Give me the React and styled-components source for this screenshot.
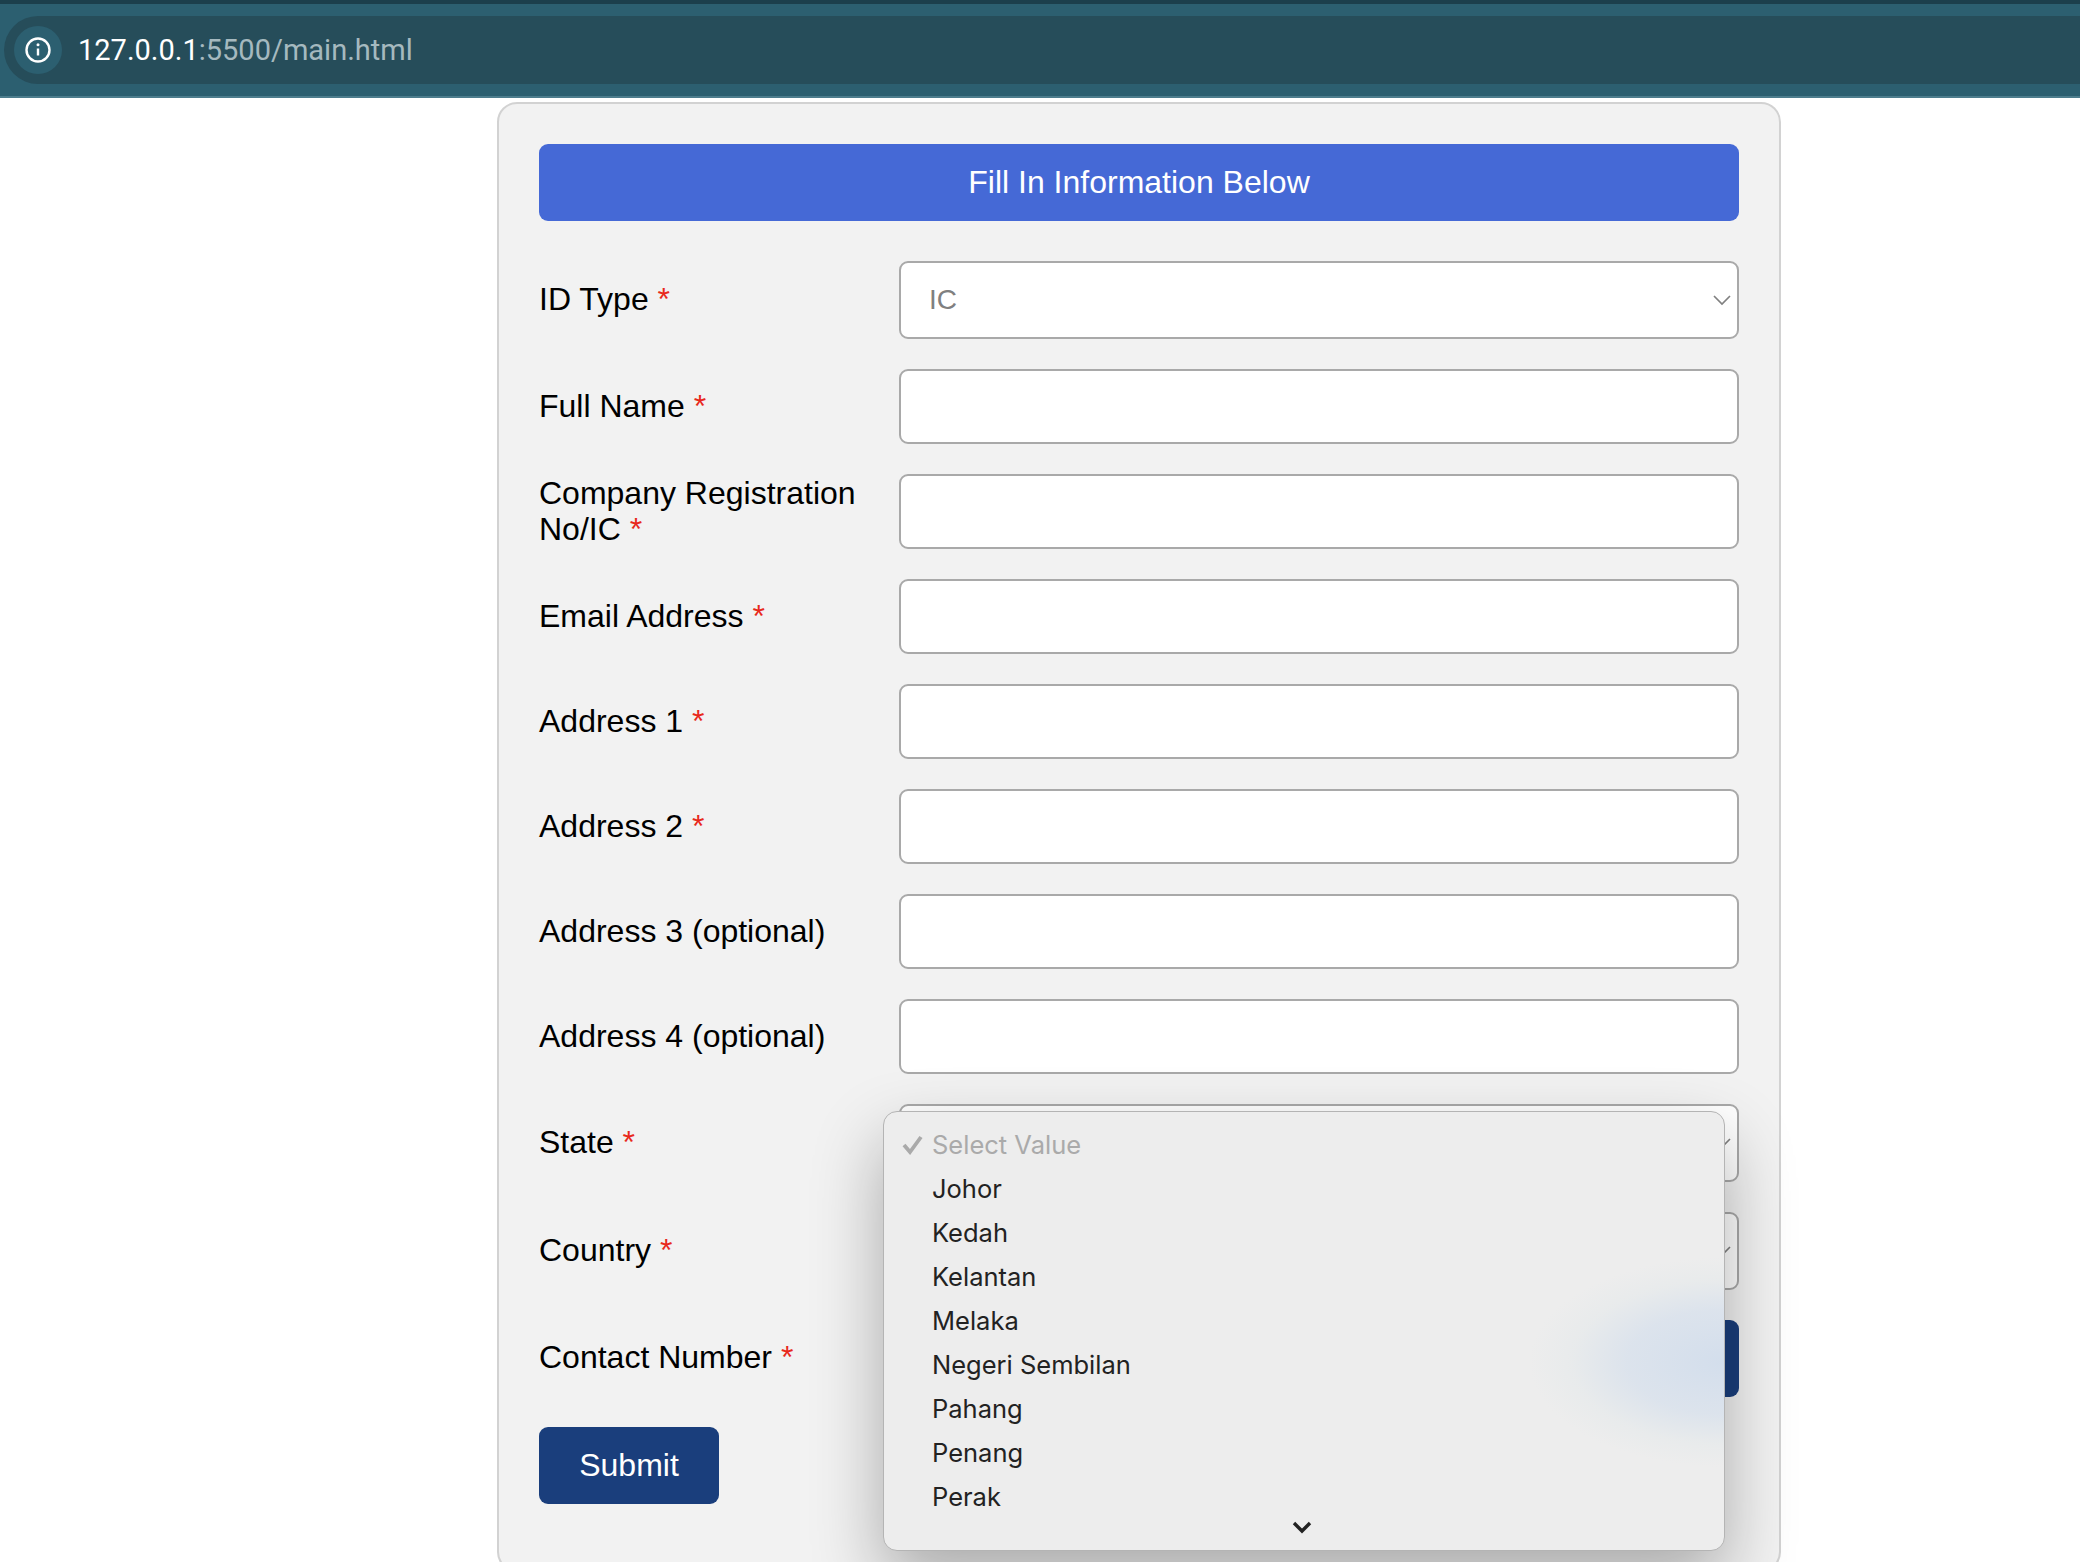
import React from 'react';
import styled, { createGlobalStyle } from 'styled-components';

const GlobalStyle = createGlobalStyle`
  html, body {
    margin: 0;
    height: 1562px;
    overflow: hidden;
    background: #fff;
  }
  * { box-sizing: border-box; }
`;

const Page = styled.div`
  width: 2080px;
  height: 1562px;
  overflow: hidden;
  font-family: "Liberation Sans", Arial, sans-serif;
`;

const BrowserBar = styled.div`
  height: 98px;
  background: #2c5f70;
  border-top: 4px solid #1c3f4c;
  border-bottom: 2px solid #4d7d8d;
  padding: 12px 0 12px 4px;
`;

const Omnibox = styled.div`
  height: 68px;
  background: #264d5a;
  border-radius: 34px 0 0 34px;
  display: flex;
  align-items: center;
  padding-left: 10px;
  font-family: Roboto, sans-serif;
  font-size: 29px;
  color: #a5b9bf;
`;

const InfoChip = styled.div`
  width: 48px;
  height: 48px;
  border-radius: 50%;
  background: #2c5f70;
  display: flex;
  align-items: center;
  justify-content: center;
  margin-right: 16px;
`;

const Host = styled.span`
  color: #fff;
`;

const Card = styled.div`
  width: 1284px;
  height: 1470px;
  margin: 4px 0 0 497px;
  padding: 40px;
  background: #f2f2f2;
  border: 2px solid #d2d2d2;
  border-radius: 20px;
  position: relative;
`;

const Banner = styled.div`
  height: 77px;
  background: #4569d6;
  border-radius: 9px;
  color: #fff;
  font-size: 32px;
  display: flex;
  align-items: center;
  justify-content: center;
  margin-bottom: 40px;
`;

const Row = styled.div`
  display: grid;
  grid-template-columns: 360px 1fr;
  align-items: center;
  margin-bottom: 30px;
`;

const Label = styled.label`
  font-size: 32px;
  line-height: 36px;
  color: #000;
  padding-right: 20px;
  padding-bottom: ${props => (props.$raised ? '4px' : '2px')};
`;

const Star = styled.span`
  color: #e8291c;
`;

const TextField = styled.input`
  display: block;
  width: 100%;
  height: 75px;
  background: #fff;
  border: 2px solid #a9a9a9;
  border-radius: 9px;
`;

const SelectBox = styled.div`
  height: 78px;
  background: #fff;
  border: 2px solid #a9a9a9;
  border-radius: 9px;
  padding: 0 5px 0 28px;
  display: flex;
  align-items: center;
  justify-content: space-between;
  font-size: 28px;
  color: #808080;
`;

const DarkButton = styled.button`
  display: block;
  width: ${props => (props.$wide ? '100%' : '180px')};
  height: 77px;
  background: #1a3e7c;
  border: 0;
  border-radius: 9px;
  color: #fff;
  font-family: inherit;
  font-size: 32px;
  padding: 0;
`;

const Dropdown = styled.div`
  position: absolute;
  left: 384px;
  top: 1007px;
  width: 842px;
  height: 440px;
  padding: 10px 0 0 48px;
  background: #ededed;
  border: 1px solid #b4b4b4;
  border-radius: 14px;
  box-shadow: 0 30px 70px rgba(0, 0, 0, 0.3);
  font-family: Inter, sans-serif;
  font-size: 25.5px;
  color: #222;
  overflow: hidden;
`;

const Glow = styled.div`
  position: absolute;
  right: -195px;
  top: 145px;
  width: 390px;
  height: 210px;
  background: radial-gradient(
    closest-side,
    #d3deec 0%,
    rgba(211, 222, 236, 0.65) 50%,
    rgba(218, 228, 232, 0.25) 78%,
    rgba(225, 232, 232, 0) 100%
  );
`;

const Option = styled.div`
  height: 44px;
  display: flex;
  align-items: center;
  position: relative;
  color: ${props => (props.$selected ? '#aaa' : '#222')};
`;

const CheckMark = styled.svg`
  position: absolute;
  left: -31px;
  top: 12px;
`;

const MoreArrow = styled.svg`
  position: absolute;
  left: 407px;
  bottom: 16px;
`;

const Chevron = () => (
  <svg width="20" height="14" viewBox="0 0 20 14" fill="none">
    <path d="M2 3l8 8 8-8" stroke="#808080" strokeWidth="1.7" />
  </svg>
);

const fields = [
  { label: 'ID Type', required: true, kind: 'select', value: 'IC' },
  { label: 'Full Name', required: true },
  { label: 'Company Registration No/IC', required: true },
  { label: 'Email Address', required: true },
  { label: 'Address 1', required: true },
  { label: 'Address 2', required: true },
  { label: 'Address 3 (optional)' },
  { label: 'Address 4 (optional)' },
  { label: 'State', required: true, kind: 'select', value: '' },
  { label: 'Country', required: true, kind: 'select', value: '' },
  { label: 'Contact Number', required: true, kind: 'button' },
];

const states = ['Johor', 'Kedah', 'Kelantan', 'Melaka', 'Negeri Sembilan', 'Pahang', 'Penang', 'Perak'];

export default function App() {
  return (
    <Page>
      <GlobalStyle />
      <BrowserBar>
        <Omnibox>
          <InfoChip>
            <svg width="28" height="28" viewBox="0 0 28 28" fill="none">
              <circle cx="14" cy="14" r="11.5" stroke="#fff" strokeWidth="2.4" />
              <path d="M14 12.5v7" stroke="#fff" strokeWidth="2.4" />
              <circle cx="14" cy="8.8" r="1.5" fill="#fff" />
            </svg>
          </InfoChip>
          <Host>127.0.0.1</Host>:5500/main.html
        </Omnibox>
      </BrowserBar>
      <Card>
        <Banner>Fill In Information Below</Banner>
        {fields.map(field => (
          <Row key={field.label}>
            <Label $raised={field.kind === 'button'}>
              {field.label}
              {field.required && ' '}
              {field.required && <Star>*</Star>}
            </Label>
            {field.kind === 'select' && (
              <SelectBox>
                <span>{field.value}</span>
                <Chevron />
              </SelectBox>
            )}
            {field.kind === 'button' && <DarkButton $wide type="button" />}
            {!field.kind && <TextField type="text" />}
          </Row>
        ))}
        <DarkButton type="button">Submit</DarkButton>
        <Dropdown>
          <Glow />
          <Option $selected>
            <CheckMark width="22" height="21" viewBox="0 0 22 21" fill="none">
              <path d="M3 11l6 7L20 3" stroke="#aaa" strokeWidth="3.8" />
            </CheckMark>
            Select Value
          </Option>
          {states.map(name => (
            <Option key={name}>{name}</Option>
          ))}
          <MoreArrow width="22" height="14" viewBox="0 0 22 14" fill="none">
            <path d="M3 3l8 8 8-8" stroke="#222" strokeWidth="3.4" />
          </MoreArrow>
        </Dropdown>
      </Card>
    </Page>
  );
}
